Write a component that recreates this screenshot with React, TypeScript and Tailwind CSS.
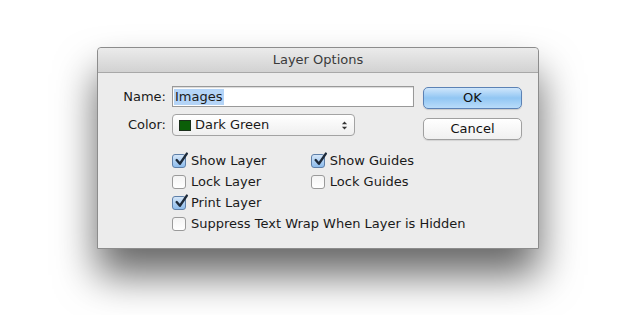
import React from 'react';

const font = { fontFamily: '"DejaVu Sans", "Lucida Grande", Verdana, sans-serif' };

function Box({ checked }: { checked?: boolean }) {
  if (checked) {
    return (
      <span className="relative w-[14px] h-[14px] rounded-[3px] border border-[#5e7fa8] bg-gradient-to-b from-[#d4e6f8] to-[#8dbcec] flex items-center justify-center shrink-0">
        <svg viewBox="0 0 14 14" className="absolute -top-[3px] left-[1px] w-[15px] h-[15px]">
          <path d="M2.5 7.5 L5.5 11 L12 1.5" fill="none" stroke="#1d2a3a" strokeWidth="2.2" strokeLinecap="round" strokeLinejoin="round" />
        </svg>
      </span>
    );
  }
  return (
    <span className="w-[14px] h-[14px] rounded-[3px] border border-[#9a9a9a] bg-gradient-to-b from-[#f4f4f4] to-[#ffffff] shrink-0" />
  );
}

function Check({ label, checked }: { label: string; checked?: boolean }) {
  return (
    <div className="flex items-center gap-[5px] h-[21px]">
      <Box checked={checked} />
      <span className="text-[13px] text-[#1a1a1a] whitespace-nowrap">{label}</span>
    </div>
  );
}

export default function App() {
  return (
    <div className="w-[630px] h-[315px] bg-white pt-[47px] pl-[97px] overflow-hidden" style={font}>
      <div className="w-[442px] h-[202px] bg-[#ececec] border border-[#8c8c8c] rounded-t-[4px] shadow-[0_26px_40px_rgba(0,0,0,0.6)] flex flex-col">
        {/* title bar */}
        <div className="h-[25px] rounded-t-[4px] bg-gradient-to-b from-[#ebebeb] to-[#d2d2d2] border-b border-[#a8a8a8] flex items-center justify-center">
          <span className="text-[13px] text-[#3a3a3a]">Layer Options</span>
        </div>

        <div className="flex pt-[13px]">
          <div className="w-[316px] shrink-0 flex flex-col">
            <div className="flex items-center gap-[6px]">
              <span className="w-[68px] text-right text-[13px] text-[#1a1a1a]">Name:</span>
              <div className="w-[242px] h-[21px] bg-white border border-[#999] shadow-[inset_0_1px_1px_rgba(0,0,0,0.15)] flex items-center pl-[1px]">
                <span className="bg-[#b4d4f7] text-[13px] text-[#1a1a1a] px-[1px] leading-[16px]">Images</span>
              </div>
            </div>
            <div className="flex items-center gap-[6px] mt-[7px]">
              <span className="w-[68px] text-right text-[13px] text-[#1a1a1a]">Color:</span>
              <div className="w-[183px] h-[22px] rounded-[4px] bg-gradient-to-b from-white to-[#efefef] border border-[#a3a3a3] flex items-center pl-[6px] pr-[6px]">
                <span className="w-[12px] h-[11px] bg-[#0b5e08] border border-[#1a2e1a]" />
                <span className="ml-[4px] text-[13px] text-[#1a1a1a] flex-1">Dark Green</span>
                <svg viewBox="0 0 8 12" className="w-[7px] h-[11px]">
                  <path d="M1 4.5 L4 1.5 L7 4.5 Z M1 7.5 L4 10.5 L7 7.5 Z" fill="#333" />
                </svg>
              </div>
            </div>

            <div className="ml-[74px] mt-[14px] flex">
              <div className="w-[141px] flex flex-col">
                <Check label="Show Layer" checked />
                <Check label="Lock Layer" />
                <Check label="Print Layer" checked />
              </div>
              <div className="flex flex-col">
                <Check label="Show Guides" checked />
                <Check label="Lock Guides" />
              </div>
            </div>
            <div className="ml-[74px]">
              <Check label="Suppress Text Wrap When Layer is Hidden" />
            </div>
          </div>

          <div className="ml-[9px] flex flex-col pt-[1px] gap-[9px]">
            <button className="w-[99px] h-[22px] rounded-[5px] border border-[#5c82b5] bg-gradient-to-b from-[#cfe6fb] via-[#91c6f3] to-[#b9dcfa] text-[13px] text-[#111] shadow-[0_1px_1px_rgba(0,0,0,0.15)]">
              OK
            </button>
            <button className="w-[99px] h-[22px] rounded-[5px] border border-[#a0a0a0] bg-gradient-to-b from-white to-[#f0f0f0] text-[13px] text-[#111] shadow-[0_1px_1px_rgba(0,0,0,0.1)]">
              Cancel
            </button>
          </div>
        </div>
      </div>
    </div>
  );
}
